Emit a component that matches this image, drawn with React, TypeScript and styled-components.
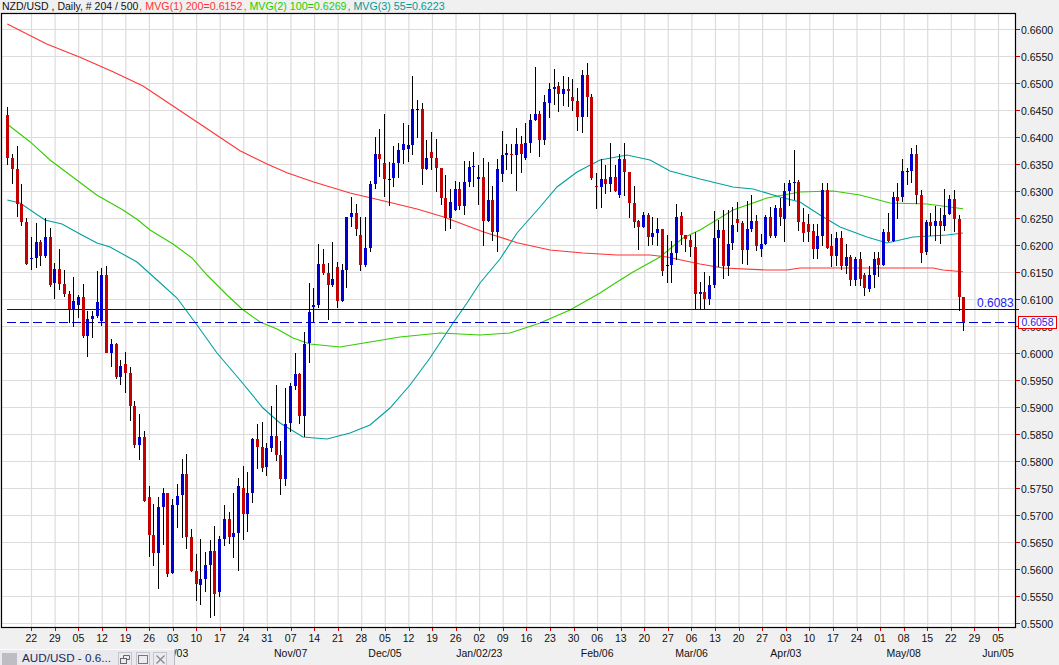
import styled, { createGlobalStyle } from "styled-components";

const GlobalStyle = createGlobalStyle`
    html, body { margin: 0; padding: 0; background: #f0f0f0; }
`

const Terminal = styled.div`
    position: relative;
    width: 1059px;
    height: 665px;
    overflow: hidden;
    background: #f0f0f0;
    font-family: "Liberation Sans", Arial, sans-serif;
    font-size: 10.5px;
    color: #111;
`

const Legend = styled.div`
    display: flex;
    gap: 1px;
    height: 13px;
    line-height: 13px;
    padding-left: 2px;
    white-space: pre;
`

const LegendItem = styled.span<{ $color?: string }>`
    color: ${props => props.$color || "#111"};
    font-size: ${props => props.$color ? "10.7px" : "10.5px"};
`

const ChartRow = styled.div`
    display: flex;
    height: 615px;
`

const Plot = styled.svg`
    display: block;
    flex: none;
    width: 1016px;
    height: 615px;
    overflow: visible;
`

const PriceAxis = styled.div`
    display: flex;
    flex-direction: column;
    padding-top: 3px;
`

const PriceRow = styled.div`
    flex: none;
    display: flex;
    align-items: center;
    gap: 1px;
    height: 27px;
`

const RedTick = styled.i`
    display: block;
    width: 4px;
    height: 1px;
    background: #d40000;
`

const DateAxis = styled.div`
    display: grid;
    grid-template-columns: repeat(42, 23.585px);
    grid-template-rows: 18px 12px;
    padding-left: 19.5px;
`

const DayLabel = styled.div`
    position: relative;
    text-align: center;
    line-height: 21px;

    &::before {
        content: "";
        position: absolute;
        left: 50%;
        top: 0;
        width: 1px;
        height: 3px;
        background: #d40000;
    }
`

const MonthLabel = styled.div<{ $col: number }>`
    grid-row: 2;
    grid-column: ${props => props.$col};
    justify-self: center;
    white-space: nowrap;
    line-height: 15px;
`

const CloseLabel = styled.div`
    position: absolute;
    left: 977px;
    top: 297px;
    color: #2222ee;
    font-size: 12px;
    line-height: 13px;
`

const PriceTag = styled.div`
    position: absolute;
    left: 1018px;
    top: 316px;
    width: 39px;
    height: 13px;
    box-sizing: border-box;
    border: 1px solid #ee0000;
    background: #fff;
    color: #2222ee;
    line-height: 11px;
    text-align: center;
`

const MiniWindow = styled.div`
    position: absolute;
    left: 0;
    top: 649px;
    width: 175px;
    height: 16px;
    box-sizing: border-box;
    display: flex;
    align-items: center;
    padding-left: 2px;
    background: #e9e9ee;
    border-top: 1px solid #fbfbfb;
    border-right: 1px solid #b8b8c0;
`

const Grip = styled.div`
    flex: none;
    width: 15px;
    height: 12px;
    margin-top: 2px;
    background-image: radial-gradient(#8a8a90 0.6px, transparent 0.8px);
    background-size: 2px 2px;
`

const MiniTitle = styled.div`
    flex: none;
    width: 96px;
    padding-left: 5px;
    color: #1b2a55;
    font-size: 11.7px;
    line-height: 16px;
    white-space: nowrap;
`

const MiniButton = styled.button`
    flex: none;
    width: 14px;
    height: 13px;
    margin: 2px 3.5px 0 0;
    padding: 0;
    display: flex;
    align-items: center;
    justify-content: center;
    background: #ececf0;
    border: 1px solid #c4c4cc;
    border-bottom: none;
    border-radius: 1px 1px 0 0;
`

// [body top, body bottom, wick top, wick bottom, kind] in screen y
type Bar = [number, number, number, number, "b" | "r" | "k"]

const bars: Bar[] = [
    [115,158,107,165,"r"],[158,169,154,184,"r"],[169,204,146,217,"r"],[204,222,184,226,"r"],[222,264,218,265,"r"],
    [258,259,237,270,"b"],[242,258,223,268,"b"],[242,256,240,266,"r"],[237,256,218,258,"b"],[237,285,228,287,"r"],
    [269,283,263,299,"b"],[269,284,249,290,"r"],[284,294,270,297,"r"],[294,309,291,323,"r"],[301,309,277,327,"b"],
    [297,305,295,318,"b"],[297,336,284,338,"r"],[319,336,311,357,"b"],[316,319,311,338,"b"],[302,316,271,318,"b"],
    [275,321,268,326,"b"],[275,353,266,353,"r"],[344,353,339,367,"b"],[344,377,343,379,"r"],[366,377,360,385,"b"],
    [364,373,352,393,"r"],[373,406,367,421,"r"],[406,445,401,448,"r"],[437,445,414,460,"b"],[437,501,431,502,"r"],
    [497,535,486,557,"r"],[535,553,504,566,"r"],[507,553,497,589,"b"],[493,507,488,545,"b"],[493,574,493,577,"r"],
    [505,573,499,574,"b"],[496,505,484,528,"b"],[474,495,459,538,"b"],[474,537,454,549,"r"],[537,571,529,572,"r"],
    [571,584,554,601,"r"],[579,585,539,605,"b"],[565,579,552,592,"b"],[551,565,540,618,"b"],[551,594,526,616,"r"],
    [539,592,536,597,"b"],[519,539,505,546,"b"],[519,537,512,544,"r"],[533,537,493,558,"b"],[486,533,478,571,"b"],
    [488,514,466,540,"r"],[493,514,472,532,"b"],[439,493,438,503,"b"],[439,447,424,469,"r"],[447,468,422,472,"r"],
    [448,467,443,476,"b"],[436,448,406,452,"b"],[436,455,385,461,"r"],[455,479,441,495,"r"],[424,479,388,486,"b"],
    [386,423,383,432,"b"],[374,386,353,390,"b"],[374,416,373,424,"r"],[344,416,332,437,"b"],[312,343,283,363,"b"],
    [305,307,288,322,"b"],[264,305,244,308,"b"],[264,273,249,275,"r"],[273,285,263,320,"r"],[279,285,242,287,"b"],
    [267,301,262,308,"r"],[270,301,264,302,"b"],[217,270,217,288,"b"],[213,217,197,227,"b"],[213,229,204,236,"r"],
    [235,265,217,271,"r"],[248,265,217,267,"b"],[184,248,181,252,"b"],[154,184,137,189,"b"],[154,159,129,177,"r"],
    [163,179,114,197,"r"],[179,180,162,206,"k"],[163,178,146,187,"b"],[150,163,143,178,"b"],[144,150,123,164,"b"],
    [145,149,125,162,"b"],[109,145,76,155,"b"],[109,110,100,138,"k"],[109,169,103,185,"r"],[158,169,140,170,"b"],
    [152,158,132,170,"r"],[158,168,139,192,"r"],[168,198,168,205,"r"],[198,218,175,231,"r"],[202,218,189,229,"b"],
    [189,210,181,211,"b"],[189,206,182,210,"r"],[182,206,161,215,"b"],[167,182,161,187,"b"],[166,167,152,187,"b"],
    [177,179,165,205,"b"],[177,221,158,246,"r"],[200,221,162,222,"b"],[200,232,186,241,"r"],[169,232,159,252,"b"],
    [155,174,131,182,"b"],[153,155,144,170,"b"],[154,155,144,174,"r"],[144,155,128,191,"b"],[144,154,136,173,"r"],
    [143,158,123,160,"b"],[120,143,114,153,"b"],[114,120,67,121,"b"],[114,140,111,157,"r"],[102,140,95,145,"b"],
    [89,103,83,118,"b"],[87,89,69,105,"b"],[86,94,82,112,"r"],[89,94,76,106,"b"],[89,91,77,107,"r"],
    [97,101,79,111,"r"],[101,117,88,131,"r"],[75,117,70,133,"b"],[75,97,63,117,"r"],[97,178,94,180,"r"],
    [186,187,173,209,"r"],[179,187,159,208,"b"],[179,184,165,194,"r"],[177,184,143,192,"b"],[177,191,165,192,"r"],
    [159,195,154,198,"b"],[159,172,143,196,"r"],[172,203,172,218,"r"],[203,222,186,228,"r"],[221,227,220,250,"r"],
    [215,227,212,228,"b"],[215,237,213,246,"r"],[233,237,217,245,"b"],[229,233,218,246,"b"],[229,271,229,276,"r"],
    [265,266,235,283,"k"],[253,265,241,283,"b"],[217,253,204,260,"b"],[216,235,212,245,"r"],[235,239,235,252,"r"],
    [240,247,235,257,"r"],[247,294,232,309,"r"],[292,294,282,309,"b"],[292,299,272,309,"r"],[285,299,276,305,"b"],
    [238,285,211,288,"b"],[230,238,220,267,"b"],[230,266,210,279,"r"],[244,266,210,276,"b"],[225,243,207,250,"b"],
    [219,223,202,232,"r"],[223,250,221,264,"r"],[229,250,201,265,"b"],[221,229,195,232,"b"],[221,246,215,251,"r"],
    [244,249,234,257,"b"],[217,244,215,245,"b"],[217,236,207,238,"r"],[208,236,205,238,"b"],[208,217,198,226,"r"],
    [191,219,183,242,"b"],[183,191,180,206,"b"],[182,183,150,200,"b"],[182,222,180,231,"r"],[222,233,208,242,"r"],
    [224,232,214,242,"r"],[231,249,224,259,"r"],[236,249,224,259,"b"],[190,236,183,246,"b"],[190,248,183,249,"r"],
    [246,256,234,267,"r"],[238,256,232,266,"b"],[238,266,231,270,"r"],[257,266,244,274,"b"],[257,280,255,286,"r"],
    [259,280,257,286,"b"],[259,279,252,286,"r"],[275,288,273,296,"r"],[275,289,266,292,"b"],[259,275,252,288,"b"],
    [258,265,252,277,"r"],[232,265,229,266,"b"],[232,241,213,242,"r"],[197,241,192,242,"b"],[197,201,183,219,"r"],
    [171,197,159,202,"b"],[171,172,168,185,"k"],[154,171,148,183,"b"],[154,195,145,204,"r"],[195,253,190,263,"r"],
    [222,252,220,255,"b"],[222,226,213,236,"r"],[221,226,206,241,"b"],[221,226,208,244,"r"],[215,226,189,231,"b"],
    [199,214,195,215,"b"],[199,219,190,232,"r"],[219,297,215,311,"r"],[297,322,297,331,"r"],
]

const redAverage = "7.3,24 46.7,44 80,57.3 113,71.7 143,86 173,106 200,124 240,150.7 267,164 287,172.7 313,181.7 350,193 383,200.7 417,209 443,216.7 483,231.7 517,242.7 550,250 583,253 617,255 650,255 667,257 700,264 723,268 767,270 787,270 800,268 900,268 933,268 943,270 963,271.7"
const greenAverage = "7.3,124.3 30,141.7 50,160 76.7,180 96.7,195 123,210 138,220 150,230 173,244 192,258 207,275 227,295 242,309 260,322 277,329 293,338 310,344 340,347 370,342 400,337 440,333 480,335 510,333 540,323 570,310 600,293 617,282 633,272 660,257 683,238 700,230 733,210 767,198 800,192 833,191 860,195 890,203 927,204 963,208.7"
const tealAverage = "7.3,200 20,203 45,220 62,224 80,234 97,243 110,247 137,262 157,280 177,298 197,325 217,353 240,380 263,408 280,423 303,437 327,439 350,433 370,425 390,408 410,385 430,358 453,323 467,303 480,283 500,259 517,233 540,207 557,187 577,172 600,160 627,155 650,160 670,171 700,179 733,187 753,189 780,197 800,202 820,215 840,227 867,237 887,243 913,237 947,235 963,233"

const prices = ["0.6600","0.6550","0.6500","0.6450","0.6400","0.6350","0.6300","0.6250","0.6200","0.6150","0.6100","0.6050","0.6000","0.5950","0.5900","0.5850","0.5800","0.5750","0.5700","0.5650","0.5600","0.5550","0.5500"]
const days = ["22","29","05","12","19","26","03","10","17","24","31","07","14","21","28","05","12","19","26","02","09","16","23","30","06","13","20","27","06","13","20","27","03","10","17","24","01","08","15","22","29","05"]
const months: [string, number][] = [["Oct/03",7],["Nov/07",12],["Dec/05",16],["Jan/02/23",20],["Feb/06",25],["Mar/06",29],["Apr/03",33],["May/08",38],["Jun/05",42]]

const barColors = { b: "#0000cc", r: "#c40000", k: "#000000" }
const gridYs = prices.map((_, i) => 29.5 + i * 27)
const gridXs = days.map((_, i) => 31.5 + i * 23.585)

function Candle({ bar, index }: { bar: Bar; index: number }) {
    const [top, bottom, high, low, kind] = bar
    const x = Math.round(7.3 + index * 4.709)
    return (
        <g>
            <rect x={x} y={high} width={1} height={low - high} fill="#000" />
            {kind === "k"
                ? <rect x={x - 1} y={top} width={3} height={1} fill="#000" />
                : <rect x={x - 1} y={top} width={3} height={Math.max(bottom - top, 1)} fill={barColors[kind]} />}
        </g>
    )
}

export default function App() {
    return (
        <Terminal>
            <GlobalStyle />
            <Legend>
                <LegendItem>NZD/USD , Daily, # 204 / 500</LegendItem>
                <LegendItem $color="#ff3333">, MVG(1) 200=0.6152</LegendItem>
                <LegendItem $color="#22cc00">, MVG(2) 100=0.6269</LegendItem>
                <LegendItem $color="#009999">, MVG(3) 55=0.6223</LegendItem>
            </Legend>
            <ChartRow>
                <Plot viewBox="0 13 1016 615">
                    <rect x={1.5} y={13.5} width={1014} height={614} fill="#fff" />
                    {gridYs.map(y => <line key={y} x1={2} x2={1015} y1={y} y2={y} stroke="#dcdcdc" strokeWidth={1.2} />)}
                    {gridXs.map(x => <line key={x} x1={x} x2={x} y1={14} y2={627} stroke="#dcdcdc" strokeWidth={1.2} />)}
                    <polyline points={redAverage} fill="none" stroke="#ff3333" strokeWidth={1.1} />
                    <polyline points={greenAverage} fill="none" stroke="#33cc00" strokeWidth={1.1} />
                    <polyline points={tealAverage} fill="none" stroke="#009f9f" strokeWidth={1.1} />
                    <line x1={7} x2={1019} y1={309.5} y2={309.5} stroke="#0000cc" strokeWidth={1.2} />
                    <line x1={7} x2={1015} y1={322.5} y2={322.5} stroke="#0000cc" strokeWidth={1.2} strokeDasharray="9 4" />
                    {bars.map((bar, i) => <Candle key={i} bar={bar} index={i} />)}
                    <rect x={1.5} y={13.5} width={1014} height={614} fill="none" stroke="#000" strokeWidth={1.2} />
                </Plot>
                <PriceAxis>
                    {prices.map(p => (
                        <PriceRow key={p}>
                            <RedTick />
                            {p}
                        </PriceRow>
                    ))}
                </PriceAxis>
            </ChartRow>
            <DateAxis>
                {days.map((d, i) => <DayLabel key={i}>{d}</DayLabel>)}
                {months.map(([label, col]) => <MonthLabel key={label} $col={col}>{label}</MonthLabel>)}
            </DateAxis>
            <CloseLabel>0.6083</CloseLabel>
            <PriceTag>0.6058</PriceTag>
            <MiniWindow>
                <Grip />
                <MiniTitle>AUD/USD - 0.6...</MiniTitle>
                <MiniButton aria-label="restore">
                    <svg width="10" height="9" viewBox="0 0 10 9" fill="none" stroke="#666">
                        <path d="M3.5 3V.5h6v4H7" />
                        <rect x=".5" y="3.5" width="6" height="5" />
                    </svg>
                </MiniButton>
                <MiniButton aria-label="maximize">
                    <svg width="10" height="9" viewBox="0 0 10 9" fill="none" stroke="#777">
                        <rect x=".5" y=".5" width="9" height="8" />
                    </svg>
                </MiniButton>
                <MiniButton aria-label="close">
                    <svg width="9" height="9" viewBox="0 0 9 9" fill="none" stroke="#888" strokeWidth="1.3">
                        <path d="M.5.5l8 8M8.5.5l-8 8" />
                    </svg>
                </MiniButton>
            </MiniWindow>
        </Terminal>
    )
}
